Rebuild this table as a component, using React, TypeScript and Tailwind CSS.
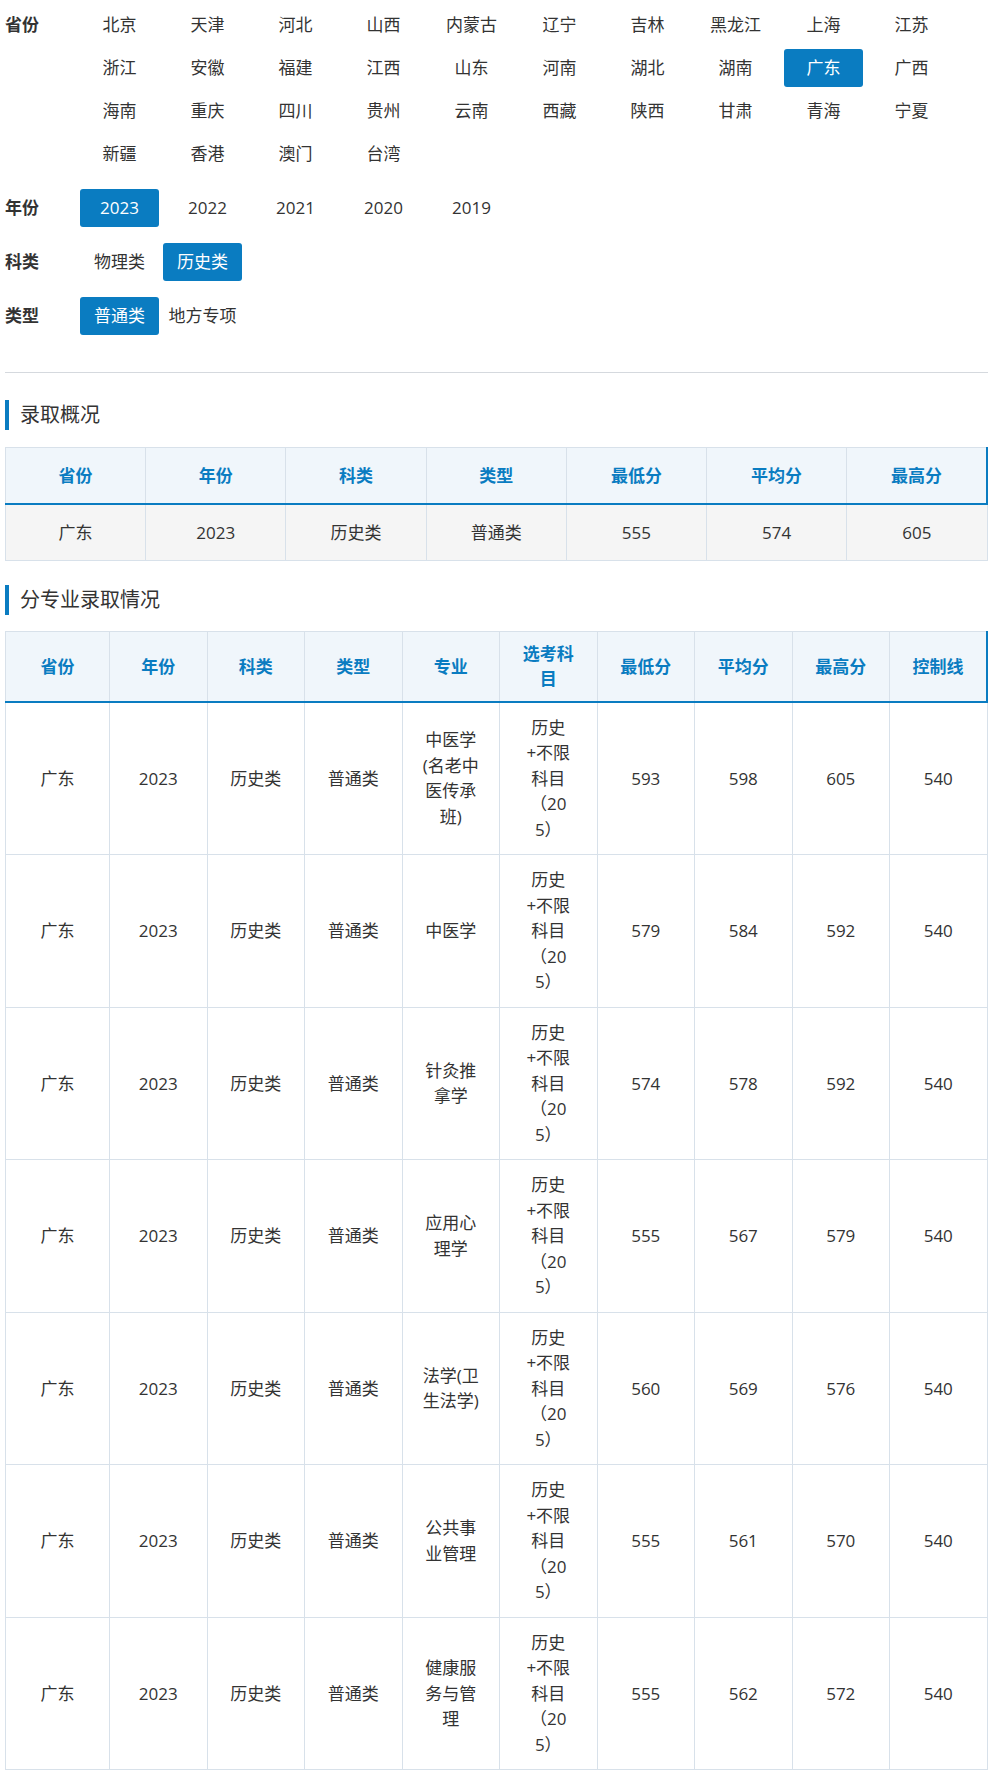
import React from "react";

const provinces: string[][] = [
  ["北京", "天津", "河北", "山西", "内蒙古", "辽宁", "吉林", "黑龙江", "上海", "江苏"],
  ["浙江", "安徽", "福建", "江西", "山东", "河南", "湖北", "湖南", "广东", "广西"],
  ["海南", "重庆", "四川", "贵州", "云南", "西藏", "陕西", "甘肃", "青海", "宁夏"],
  ["新疆", "香港", "澳门", "台湾"],
];

const years = ["2023", "2022", "2021", "2020", "2019"];

type Row = { major: string[]; min: string; avg: string; max: string; ctrl: string };

const rows: Row[] = [
  { major: ["中医学", "(名老中", "医传承", "班)"], min: "593", avg: "598", max: "605", ctrl: "540" },
  { major: ["中医学"], min: "579", avg: "584", max: "592", ctrl: "540" },
  { major: ["针灸推", "拿学"], min: "574", avg: "578", max: "592", ctrl: "540" },
  { major: ["应用心", "理学"], min: "555", avg: "567", max: "579", ctrl: "540" },
  { major: ["法学(卫", "生法学)"], min: "560", avg: "569", max: "576", ctrl: "540" },
  { major: ["公共事", "业管理"], min: "555", avg: "561", max: "570", ctrl: "540" },
  { major: ["健康服", "务与管", "理"], min: "555", avg: "562", max: "572", ctrl: "540" },
];

const subjectLines = ["历史", "+不限", "科目", "（20", "5）"];

function Item({ text, active }: { text: string; active?: boolean }) {
  return (
    <div
      className={
        "w-[79px] h-[38px] flex items-center justify-center rounded-[3px] text-[17px] whitespace-nowrap " +
        (active ? "bg-[#0a7cc1] text-white" : "text-[#333333]")
      }
    >
      {text}
    </div>
  );
}

function Label({ text }: { text: string }) {
  return (
    <div className="w-[75px] h-[38px] flex items-center font-bold text-[17px] text-[#333333] shrink-0">
      {text}
    </div>
  );
}

function SectionTitle({ text }: { text: string }) {
  return (
    <div className="flex items-center h-[30px] border-l-4 border-[#0a7cc1] pl-[11px] text-[20px] text-[#333333]">
      {text}
    </div>
  );
}

function Lines({ lines }: { lines: string[] }) {
  return (
    <div className="flex flex-col items-center">
      {lines.map((l, i) => (
        <span key={i} className="block whitespace-nowrap">
          {l}
        </span>
      ))}
    </div>
  );
}

export default function App() {
  const th1 = "border border-[#d8e1ea] border-b-2 border-b-[#0a7cc1] bg-[#f0f6fb] text-[#0a7cc1] font-bold text-[17px] h-[56px] p-0 text-center align-middle";
  const td1 = "border border-[#d8e1ea] bg-[#f5f5f5] text-[#333333] text-[17px] h-[57px] p-0 text-center align-middle";
  const th2 = "border border-[#d8e1ea] border-b-2 border-b-[#0a7cc1] bg-[#f0f6fb] text-[#0a7cc1] font-bold text-[17px] leading-[25.5px] h-[70px] p-0 text-center align-middle";
  const td2 = "border border-[#d8e1ea] bg-white text-[#333333] text-[17px] leading-[25.5px] px-0 py-[12px] text-center align-middle";

  const headers1 = ["省份", "年份", "科类", "类型", "最低分", "平均分", "最高分"];
  const headers2: (string | string[])[] = ["省份", "年份", "科类", "类型", "专业", ["选考科", "目"], "最低分", "平均分", "最高分", "控制线"];

  return (
    <div className="w-[994px] bg-white pl-[5px] pr-[6px] pb-[9px] font-['Open_Sans','Noto_Sans_CJK_SC','Microsoft_YaHei',sans-serif] text-[#333333]">
      <div className="pt-[6px]">
        <div className="flex">
          <Label text="省份" />
          <div className="flex flex-col gap-[5px]">
            {provinces.map((r, ri) => (
              <div key={ri} className="flex gap-[9px]">
                {r.map((p) => (
                  <Item key={p} text={p} active={p === "广东"} />
                ))}
              </div>
            ))}
          </div>
        </div>
        <div className="flex mt-[16px]">
          <Label text="年份" />
          <div className="flex gap-[9px]">
            {years.map((y) => (
              <Item key={y} text={y} active={y === "2023"} />
            ))}
          </div>
        </div>
        <div className="flex mt-[16px]">
          <Label text="科类" />
          <div className="flex gap-[4px]">
            <Item text="物理类" />
            <Item text="历史类" active />
          </div>
        </div>
        <div className="flex mt-[16px]">
          <Label text="类型" />
          <div className="flex gap-[4px]">
            <Item text="普通类" active />
            <Item text="地方专项" />
          </div>
        </div>
      </div>

      <div className="mt-[37px] h-px bg-[#d5d9de]" />

      <div className="mt-[27px]">
        <SectionTitle text="录取概况" />
      </div>

      <table className="mt-[17px] w-full table-fixed border-collapse">
        <thead>
          <tr>
            {headers1.map((h, i) => (
              <th key={h} className={th1 + (i === headers1.length - 1 ? " border-r-2 border-r-[#0a7cc1]" : "")}>
                {h}
              </th>
            ))}
          </tr>
        </thead>
        <tbody>
          <tr>
            {["广东", "2023", "历史类", "普通类", "555", "574", "605"].map((v, i) => (
              <td key={i} className={td1}>
                {v}
              </td>
            ))}
          </tr>
        </tbody>
      </table>

      <div className="mt-[24px]">
        <SectionTitle text="分专业录取情况" />
      </div>

      <table className="mt-[16px] w-full table-fixed border-collapse">
        <colgroup>
          <col className="w-[104px]" />
          <col />
          <col />
          <col />
          <col />
          <col />
          <col />
          <col />
          <col />
          <col />
        </colgroup>
        <thead>
          <tr>
            {headers2.map((h, i) => (
              <th key={i} className={th2 + (i === headers2.length - 1 ? " border-r-2 border-r-[#0a7cc1]" : "")}>
                {Array.isArray(h) ? <Lines lines={h} /> : h}
              </th>
            ))}
          </tr>
        </thead>
        <tbody>
          {rows.map((r, ri) => (
            <tr key={ri}>
              <td className={td2}>广东</td>
              <td className={td2}>2023</td>
              <td className={td2}>历史类</td>
              <td className={td2}>普通类</td>
              <td className={td2}>
                <Lines lines={r.major} />
              </td>
              <td className={td2}>
                <Lines lines={subjectLines} />
              </td>
              <td className={td2}>{r.min}</td>
              <td className={td2}>{r.avg}</td>
              <td className={td2}>{r.max}</td>
              <td className={td2}>{r.ctrl}</td>
            </tr>
          ))}
        </tbody>
      </table>
    </div>
  );
}
